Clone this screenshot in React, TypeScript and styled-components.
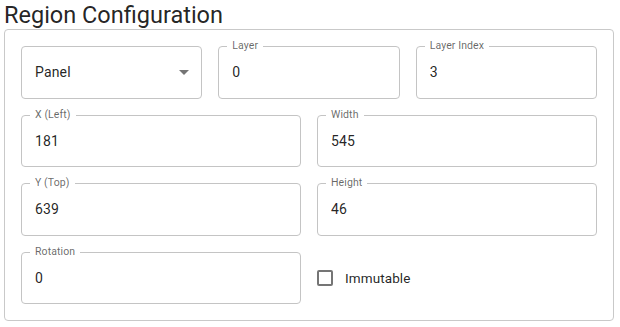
import React from "react";
import styled, { createGlobalStyle } from "styled-components";

const Global = createGlobalStyle`
  html, body { margin: 0; padding: 0; background: #fff; }
  body { font-family: Roboto, "Liberation Sans", Arial, sans-serif; color: rgba(0,0,0,0.87); }
  * { box-sizing: border-box; }
`;

const Page = styled.div`
  padding: 0 6px 0 4px;
  width: 620px;
`;

const Title = styled.h6`
  margin: 0;
  height: 29px;
  font-size: 23.5px;
  line-height: 31px;
  font-weight: 400;
  letter-spacing: 0;
  color: rgba(0, 0, 0, 0.87);
  white-space: nowrap;
`;

const Panel = styled.div`
  border: 1px solid #c9c9c9;
  border-radius: 4px;
  padding: 16px;
  display: flex;
  flex-direction: column;
  gap: 16px;
`;

const Row = styled.div<{ $cols: number }>`
  display: grid;
  grid-template-columns: repeat(${(p) => p.$cols}, 1fr);
  gap: 16px;
`;

const Field = styled.div`
  position: relative;
  height: 52.5px;
  border: 1px solid #c4c4c4;
  border-radius: 4px;
  display: flex;
  align-items: center;
  padding: 0 14px 0 13px;
  font-size: 14px;
  color: rgba(0, 0, 0, 0.87);
`;

const Label = styled.span`
  position: absolute;
  top: -7px;
  left: 8px;
  padding: 0 5px;
  background: #fff;
  font-size: 10.5px;
  line-height: 12px;
  color: rgba(0, 0, 0, 0.6);
  letter-spacing: 0.1px;
`;

const Value = styled.span`
  flex: 1;
  line-height: 20px;
  letter-spacing: 0.15px;
`;

const Arrow = styled.svg`
  width: 24px;
  height: 24px;
  margin-right: -9px;
  fill: rgba(0, 0, 0, 0.54);
  flex: none;
`;

const CheckRow = styled.label`
  display: flex;
  align-items: center;
  gap: 12px;
  font-size: 13.5px;
  letter-spacing: 0.1px;
  color: rgba(0, 0, 0, 0.87);
`;

const Box = styled.span`
  width: 16px;
  height: 16px;
  border: 2px solid rgba(0, 0, 0, 0.54);
  border-radius: 2px;
  flex: none;
`;

function TextField({ label, value }: { label: string; value: string }) {
  return (
    <Field>
      <Label>{label}</Label>
      <Value>{value}</Value>
    </Field>
  );
}

export default function App() {
  return (
    <Page>
      <Global />
      <Title>Region Configuration</Title>
      <Panel>
        <Row $cols={3}>
          <Field>
            <Value>Panel</Value>
            <Arrow viewBox="0 0 24 24">
              <path d="M7 10l5 5 5-5z" />
            </Arrow>
          </Field>
          <TextField label="Layer" value="0" />
          <TextField label="Layer Index" value="3" />
        </Row>
        <Row $cols={2}>
          <TextField label="X (Left)" value="181" />
          <TextField label="Width" value="545" />
        </Row>
        <Row $cols={2}>
          <TextField label="Y (Top)" value="639" />
          <TextField label="Height" value="46" />
        </Row>
        <Row $cols={2}>
          <TextField label="Rotation" value="0" />
          <CheckRow>
            <Box />
            Immutable
          </CheckRow>
        </Row>
      </Panel>
    </Page>
  );
}
